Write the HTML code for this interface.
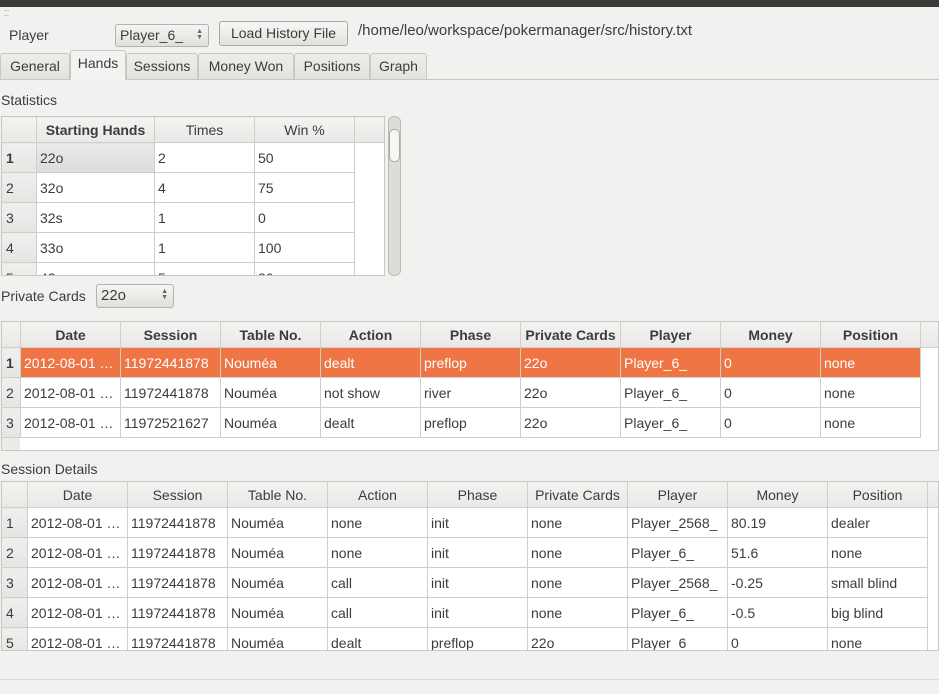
<!DOCTYPE html>
<html><head><meta charset="utf-8">
<style>
*{box-sizing:border-box;margin:0;padding:0}
body{width:939px;height:694px;overflow:hidden;background:#f2f1f0;font-family:"Liberation Sans","DejaVu Sans",sans-serif;font-size:14px;color:#3c3c3c;position:relative}
.a{position:absolute}
.topbar{left:0;top:0;width:939px;height:7px;background:#3c3b37}
.combo{border:1px solid #b4b2ad;border-radius:3px;background:linear-gradient(#f6f5f4,#e2e0dc);padding-left:4px;line-height:21px}
.btn{border:1px solid #a9a7a2;border-radius:3px;background:linear-gradient(#f8f7f6,#e3e1dd);text-align:center;line-height:22px}
.arr{position:absolute;right:5px;top:4px;font-size:7px;line-height:6px;color:#666}
.tab{top:53px;height:26px;border:1px solid #c9c7c2;border-bottom:none;background:linear-gradient(#eeedeb,#e4e2df);text-align:center;line-height:25px;border-radius:3px 3px 0 0}
.tab.on{top:50px;height:30px;background:#f4f3f2}
table{border-collapse:collapse;table-layout:fixed;position:absolute}
td,th{border:1px solid #d0cec9;white-space:nowrap;overflow:hidden;padding:0 3px;text-align:left;font-weight:normal}
th{background:linear-gradient(#f4f3f2,#e9e8e6);text-align:center;color:#3c3c3c}
td{background:#fff}
td.h{background:linear-gradient(#f0efed,#e6e5e3);text-align:left;padding-left:4px}
.b th{font-weight:bold}
tr.sel td{background:#ef7545;color:#fff}
tr.sel td.h{background:linear-gradient(#f0efed,#e6e5e3);color:#3c3c3c;font-weight:bold}
tr.hd{height:25px}
</style></head><body>
<div class="a topbar"></div>
<div class="a" style="left:4px;top:10px;width:5px;height:6px;border-top:1px solid #ccc;border-bottom:1px solid #ccc"></div>
<div class="a" style="left:9px;top:27px">Player</div>
<div class="a combo" style="left:115px;top:24px;width:94px;height:23px">Player_6_<div class="arr">▲<br>▼</div></div>
<div class="a btn" style="left:219px;top:21px;width:129px;height:25px">Load History File</div>
<div class="a" style="left:358px;top:22px;font-size:15px">/home/leo/workspace/pokermanager/src/history.txt</div>

<div class="a" style="left:0;top:79px;width:939px;height:1px;background:#c9c7c2"></div>
<div class="a tab" style="left:0;width:70px">General</div>
<div class="a tab on" style="left:70px;width:56px">Hands</div>
<div class="a tab" style="left:126px;width:72px">Sessions</div>
<div class="a tab" style="left:198px;width:96px">Money Won</div>
<div class="a tab" style="left:294px;width:76px">Positions</div>
<div class="a tab" style="left:370px;width:57px">Graph</div>

<div class="a" style="left:1px;top:92px">Statistics</div>
<div class="a" style="left:1px;top:116px;width:384px;height:160px;border:1px solid #c9c7c2;background:#fff;overflow:hidden">
<table class="b" style="left:-1px;top:-1px;width:384px">
<colgroup><col style="width:35px"><col style="width:118px"><col style="width:100px"><col style="width:100px"><col style="width:31px"></colgroup>
<tr class="hd" style="height:26px"><th></th><th>Starting Hands</th><th style="font-weight:normal">Times</th><th style="font-weight:normal">Win %</th><th style="border-right:none"></th></tr>
<tr style="height:30px"><td class="h"><b>1</b></td><td style="background:linear-gradient(#eaeaea,#dcdcdc)">22o</td><td>2</td><td>50</td><td style="border:none"></td></tr>
<tr style="height:30px"><td class="h">2</td><td>32o</td><td>4</td><td>75</td><td style="border:none"></td></tr>
<tr style="height:30px"><td class="h">3</td><td>32s</td><td>1</td><td>0</td><td style="border:none"></td></tr>
<tr style="height:30px"><td class="h">4</td><td>33o</td><td>1</td><td>100</td><td style="border:none"></td></tr>
<tr style="height:30px"><td class="h">5</td><td>42o</td><td>5</td><td>80</td><td style="border:none"></td></tr>
</table></div>
<div class="a" style="left:388px;top:116px;width:13px;height:160px;border:1px solid #bdbbb6;border-radius:6px;background:#dedcd9"></div>
<div class="a" style="left:389px;top:129px;width:11px;height:33px;border:1px solid #a9a7a2;border-radius:5px;background:#f7f6f5"></div>

<div class="a" style="left:1px;top:288px">Private Cards</div>
<div class="a combo" style="left:96px;top:284px;width:78px;height:24px;font-size:15px">22o<div class="arr">▲<br>▼</div></div>

<div class="a" style="left:1px;top:321px;width:938px;height:130px;border:1px solid #c9c7c2;background:#fff;overflow:hidden">
<div class="a" style="left:0;top:0;width:18px;height:130px;background:#ecebe9"></div>
<table class="b" style="left:-1px;top:-1px;width:938px">
<colgroup><col style="width:19px"><col style="width:100px"><col style="width:100px"><col style="width:100px"><col style="width:100px"><col style="width:100px"><col style="width:100px"><col style="width:100px"><col style="width:100px"><col style="width:100px"><col style="width:19px"></colgroup>
<tr class="hd" style="height:26px"><th></th><th>Date</th><th>Session</th><th>Table No.</th><th>Action</th><th>Phase</th><th>Private Cards</th><th>Player</th><th>Money</th><th>Position</th><th></th></tr>
<tr class="sel" style="height:30px"><td class="h">1</td><td>2012-08-01 …</td><td>11972441878</td><td>Nouméa</td><td>dealt</td><td>preflop</td><td>22o</td><td>Player_6_</td><td>0</td><td>none</td><td style="background:#fff;border:none"></td></tr>
<tr style="height:30px"><td class="h">2</td><td>2012-08-01 …</td><td>11972441878</td><td>Nouméa</td><td>not show</td><td>river</td><td>22o</td><td>Player_6_</td><td>0</td><td>none</td><td style="border:none"></td></tr>
<tr style="height:30px"><td class="h">3</td><td>2012-08-01 …</td><td>11972521627</td><td>Nouméa</td><td>dealt</td><td>preflop</td><td>22o</td><td>Player_6_</td><td>0</td><td>none</td><td style="border:none"></td></tr>
</table></div>

<div class="a" style="left:1px;top:461px">Session Details</div>
<div class="a" style="left:1px;top:481px;width:938px;height:170px;border:1px solid #c9c7c2;background:#fff;overflow:hidden">
<table style="left:-1px;top:-1px;width:938px">
<colgroup><col style="width:26px"><col style="width:100px"><col style="width:100px"><col style="width:100px"><col style="width:100px"><col style="width:100px"><col style="width:100px"><col style="width:100px"><col style="width:100px"><col style="width:100px"><col style="width:12px"></colgroup>
<tr class="hd" style="height:26px"><th></th><th>Date</th><th>Session</th><th>Table No.</th><th>Action</th><th>Phase</th><th>Private Cards</th><th>Player</th><th>Money</th><th>Position</th><th></th></tr>
<tr style="height:30px"><td class="h">1</td><td>2012-08-01 …</td><td>11972441878</td><td>Nouméa</td><td>none</td><td>init</td><td>none</td><td>Player_2568_</td><td>80.19</td><td>dealer</td><td style="border:none"></td></tr>
<tr style="height:30px"><td class="h">2</td><td>2012-08-01 …</td><td>11972441878</td><td>Nouméa</td><td>none</td><td>init</td><td>none</td><td>Player_6_</td><td>51.6</td><td>none</td><td style="border:none"></td></tr>
<tr style="height:30px"><td class="h">3</td><td>2012-08-01 …</td><td>11972441878</td><td>Nouméa</td><td>call</td><td>init</td><td>none</td><td>Player_2568_</td><td>-0.25</td><td>small blind</td><td style="border:none"></td></tr>
<tr style="height:30px"><td class="h">4</td><td>2012-08-01 …</td><td>11972441878</td><td>Nouméa</td><td>call</td><td>init</td><td>none</td><td>Player_6_</td><td>-0.5</td><td>big blind</td><td style="border:none"></td></tr>
<tr style="height:30px"><td class="h">5</td><td>2012-08-01 …</td><td>11972441878</td><td>Nouméa</td><td>dealt</td><td>preflop</td><td>22o</td><td>Player_6_</td><td>0</td><td>none</td><td style="border:none"></td></tr>
</table></div>
<div class="a" style="left:0;top:679px;width:939px;height:1px;background:#dcdad6"></div>
</body></html>
